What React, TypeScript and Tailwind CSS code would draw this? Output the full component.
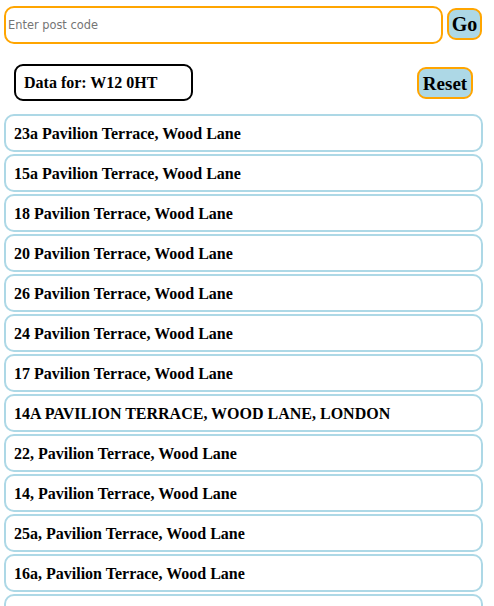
import { useState } from 'react'

const addresses = [
  '23a Pavilion Terrace, Wood Lane',
  '15a Pavilion Terrace, Wood Lane',
  '18 Pavilion Terrace, Wood Lane',
  '20 Pavilion Terrace, Wood Lane',
  '26 Pavilion Terrace, Wood Lane',
  '24 Pavilion Terrace, Wood Lane',
  '17 Pavilion Terrace, Wood Lane',
  '14A PAVILION TERRACE, WOOD LANE, LONDON',
  '22, Pavilion Terrace, Wood Lane',
  '14, Pavilion Terrace, Wood Lane',
  '25a, Pavilion Terrace, Wood Lane',
  '16a, Pavilion Terrace, Wood Lane',
  '19, Pavilion Terrace, Wood Lane',
]

export default function App() {
  const [code, setCode] = useState('')

  return (
    <div className="w-[494px] bg-white pt-[6px] font-['Liberation_Serif',serif] text-black">
      {/* Search */}
      <div className="flex items-start pl-1 pr-3">
        <input
          value={code}
          onChange={(e) => setCode(e.target.value)}
          placeholder="Enter post code"
          className="h-[38px] w-[439px] rounded-[10px] border-2 border-[#ffa500] px-[2px] font-['DejaVu_Sans',sans-serif] text-[11.4px] outline-none placeholder:text-[#757575]"
        />
        <button className="ml-[4px] mt-[2px] h-[32px] w-[35px] rounded-[9px] border-2 border-[#ffa500] bg-[#add8e6] text-[20px] font-bold leading-none">
          Go
        </button>
      </div>

      {/* Result header */}
      <div className="mt-[20px] flex items-start pl-[14px] pr-[21px]">
        <div className="flex h-[37px] w-[179px] items-center rounded-[9px] border-2 border-black pl-[8px] pt-[1px] text-[16px] font-bold">
          Data for: W12 0HT
        </div>
        <button className="ml-auto mt-[3px] h-[32px] w-[56px] rounded-[9px] border-2 border-[#ffa500] bg-[#add8e6] text-[19px] font-bold leading-none">
          Reset
        </button>
      </div>

      {/* Address list */}
      <ul className="mt-[13px] flex flex-col gap-[2px] pl-1">
        {addresses.map((a) => (
          <li
            key={a}
            className="flex h-[38px] w-[479px] items-center rounded-[10px] border-2 border-[#add8e6] pl-[8px] pt-[2px] text-[16px] font-bold"
          >
            {a}
          </li>
        ))}
      </ul>
    </div>
  )
}
